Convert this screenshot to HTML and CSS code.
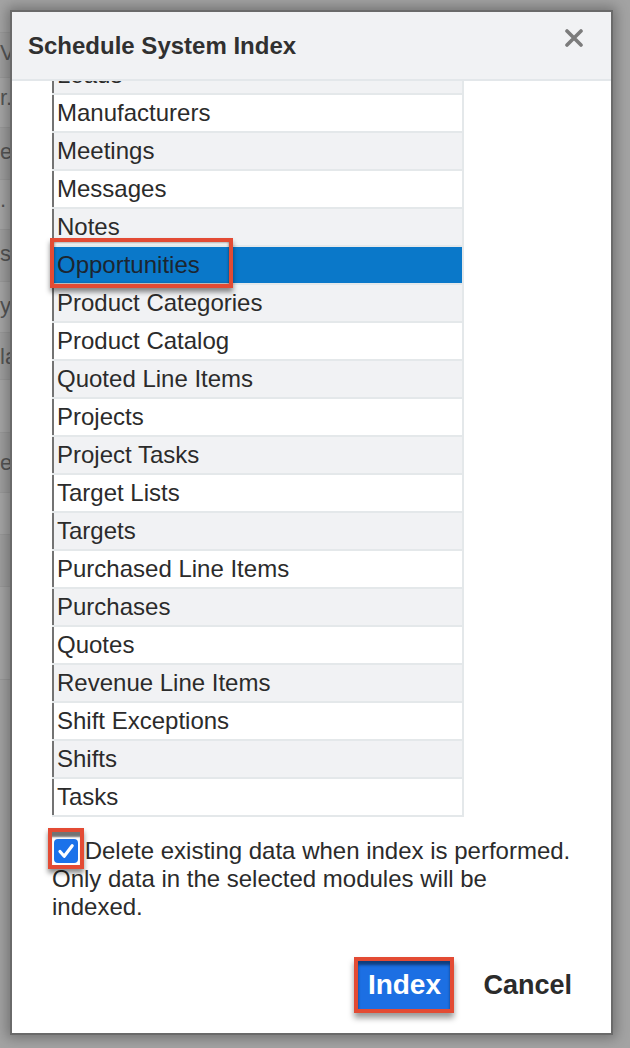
FILE: index.html
```html
<!DOCTYPE html>
<html lang="en">
<head>
<meta charset="utf-8">
<title>Schedule System Index</title>
<link rel="stylesheet" href="styles.css">
</head>
<body>
<div class="page" aria-hidden="true">
  <div class="page-row h33"></div>
  <div class="page-row h45 alt">View</div>
  <div class="page-row h50">r. A</div>
  <div class="page-row h52 alt">e</div>
  <div class="page-row h50">.</div>
  <div class="page-row h52 alt">s</div>
  <div class="page-row h51">y</div>
  <div class="page-row h47 alt">la</div>
  <div class="page-row h53"></div>
  <div class="page-row h60 alt">e</div>
  <div class="page-row h42"></div>
  <div class="page-row h52 alt"></div>
  <div class="page-row h93"></div>
</div>

<div class="modal" role="dialog" aria-labelledby="dlg-title">
  <div class="modal-header">
    <h3 id="dlg-title" class="modal-title">Schedule System Index</h3>
    <button class="close" type="button" aria-label="Close">
      <svg width="18" height="18" viewBox="0 0 18 18"><path d="M2 2 L16 16 M16 2 L2 16" stroke="#7c7c7c" stroke-width="3.6" stroke-linecap="round" fill="none"/></svg>
    </button>
  </div>
  <div class="modal-body">
    <ul class="module-list" role="listbox" aria-multiselectable="true">
      <li>Accounts</li>
      <li>Bugs</li>
      <li>Calls</li>
      <li>Campaigns</li>
      <li>Cases</li>
      <li>Contacts</li>
      <li>Contracts</li>
      <li>Documents</li>
      <li>Employees</li>
      <li>KBContents</li>
      <li>Leads</li>
      <li>Manufacturers</li>
      <li>Meetings</li>
      <li>Messages</li>
      <li>Notes</li>
      <li class="selected" aria-selected="true">Opportunities<span class="annot annot-opp"></span></li>
      <li>Product Categories</li>
      <li>Product Catalog</li>
      <li>Quoted Line Items</li>
      <li>Projects</li>
      <li>Project Tasks</li>
      <li>Target Lists</li>
      <li>Targets</li>
      <li>Purchased Line Items</li>
      <li>Purchases</li>
      <li>Quotes</li>
      <li>Revenue Line Items</li>
      <li>Shift Exceptions</li>
      <li>Shifts</li>
      <li>Tasks</li>
    </ul>
    <p class="option"><span class="cb-wrap"><span class="cb" role="checkbox" aria-checked="true"><svg width="24" height="24" viewBox="0 0 24 24"><path d="M6 12.5 L10.2 17.2 L18.2 6.8" stroke="#fff" stroke-width="3.2" stroke-linecap="round" stroke-linejoin="round" fill="none"/></svg></span><span class="annot annot-cb"></span></span> Delete existing data when index is performed. Only data in the selected modules will be indexed.</p>
  </div>
  <div class="modal-footer">
    <button class="btn-primary" type="button">Index</button>
    <button class="btn-link" type="button">Cancel</button>
  </div>
</div>
<script src="script.js"></script>
</body>
</html>
```

FILE: styles.css
```css
html, body {
  margin: 0;
  padding: 0;
}
body {
  background: #a3a3a3;
  font-family: "Liberation Sans", Arial, sans-serif;
  width: 630px;
  height: 1048px;
  overflow: hidden;
}

/* dimmed page behind the dialog (only its left sliver shows) */
.page {
  width: 11px;
  overflow: hidden;
  display: flex;
  flex-direction: column;
}
.page-row {
  font-size: 22px;
  color: #555;
  background: #a6a6a6;
  border-bottom: 1px solid #999;
  white-space: nowrap;
  overflow: hidden;
  box-sizing: border-box;
}
.page-row.alt { background: #9f9f9f; }
.h33 { height: 33px; line-height: 33px; background: #a4a4a4; }
.h42 { height: 42px; line-height: 42px; }
.h45 { height: 45px; line-height: 40px; }
.h47 { height: 47px; line-height: 47px; }
.h50 { height: 50px; line-height: 40px; }
.h51 { height: 51px; line-height: 48px; }
.h52 { height: 52px; line-height: 48px; }
.h53 { height: 53px; line-height: 53px; }
.h60 { height: 60px; line-height: 60px; }
.h93 { height: 93px; line-height: 93px; }

/* dialog */
.modal {
  position: absolute;
  left: 10px;
  top: 10px;
  width: 603px;
  height: 1025px;
  box-sizing: border-box;
  border: 2px solid #6a6a6a;
  background: #fff;
  box-shadow: 0 0 12px 3px rgba(0, 0, 0, 0.3);
  display: flex;
  flex-direction: column;
}
.modal-header {
  flex: none;
  height: 67px;
  background: #f1f2f4;
  border-bottom: 2px solid #e3e7ea;
  display: flex;
  justify-content: space-between;
  align-items: center;
  padding: 0 28px 0 16px;
}
.modal-title {
  margin: 0;
  font-size: 24px;
  line-height: 28px;
  font-weight: bold;
  color: #303030;
}
.close {
  align-self: flex-start;
  margin-top: 17px;
  padding: 0;
  border: 0;
  background: none;
  width: 18px;
  height: 18px;
  display: block;
}
.close svg { display: block; filter: blur(0.3px); }

.modal-body {
  flex: 1;
  overflow: hidden;
  padding: 16px 35px 40px 40px;
}
.module-list {
  list-style: none;
  margin: 0;
  padding: 2px 2px 2px 0;
  width: 412px;
  box-sizing: border-box;
  background: #e4e8ea;
  display: flex;
  flex-direction: column;
  gap: 2px;
}
.module-list li {
  height: 36px;
  line-height: 36px;
  font-size: 24px;
  color: #2b2b2b;
  background: #fff;
  border-left: 2px solid #737373;
  padding-left: 3px;
  white-space: nowrap;
}
.module-list li:nth-child(odd) { background: #f1f2f4; }
.module-list li.selected {
  background: #0a78c9;
  color: #1c2530;
  position: relative;
}

/* red annotation boxes */
.annot {
  position: absolute;
  z-index: 1;
  box-sizing: border-box;
  border: 4px solid #e34b34;
  box-shadow: 0 4px 5px rgba(0, 0, 0, 0.45), inset 0 0 3px rgba(0, 0, 0, 0.55);
  pointer-events: none;
}
.annot-opp {
  left: -4px;
  top: -9px;
  width: 183px;
  height: 50px;
}

.option {
  margin: 20px 0 0;
  font-size: 24px;
  line-height: 28px;
  color: #2b2b2b;
}
.cb-wrap {
  position: relative;
  display: inline-block;
  vertical-align: -4px;
  margin-left: 2px;
  width: 24px;
  height: 24px;
}
.cb {
  display: block;
  width: 24px;
  height: 24px;
  border-radius: 4px;
  background: #1b72ea;
}
.cb svg { display: block; }
.annot-cb {
  top: -11px;
  left: -6px;
  right: -6px;
  bottom: -6px;
  box-shadow: 0 4px 5px rgba(0, 0, 0, 0.45), inset 0 6px 2px -1px rgba(90, 90, 90, 0.85);
}

.modal-footer {
  flex: none;
  display: flex;
  justify-content: flex-end;
  align-items: center;
  gap: 33px;
  padding: 20px 39px 24px 0;
}
.btn-primary {
  width: 92px;
  height: 48px;
  padding: 0;
  border: 0;
  background: #1c6fe3;
  color: #fff;
  font-family: "Liberation Sans", Arial, sans-serif;
  font-weight: bold;
  font-size: 28px;
  line-height: 48px;
  box-shadow: 0 0 0 4px #e34b34, 0 5px 6px 4px rgba(0, 0, 0, 0.4), inset 0 4px 3px rgba(0, 0, 0, 0.45);
}
.btn-link {
  padding: 0;
  border: 0;
  background: none;
  color: #2b2b2b;
  font-family: "Liberation Sans", Arial, sans-serif;
  font-weight: bold;
  font-size: 27px;
  line-height: 48px;
}
```

FILE: script.js
```js
document.querySelector('.modal-body').scrollTop = 422;
```
